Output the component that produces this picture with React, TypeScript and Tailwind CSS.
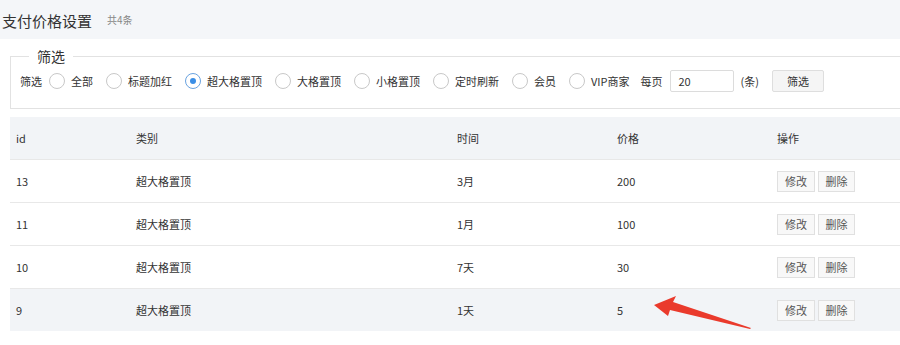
import React from "react";

const font = { fontFamily: '"Noto Sans CJK SC", "Noto Sans", sans-serif' };

const options = ["全部", "标题加红", "超大格置顶", "大格置顶", "小格置顶", "定时刷新", "会员", "VIP商家"];

const rows = [
  { id: "13", type: "超大格置顶", time: "3月", price: "200" },
  { id: "11", type: "超大格置顶", time: "1月", price: "100" },
  { id: "10", type: "超大格置顶", time: "7天", price: "30" },
  { id: "9", type: "超大格置顶", time: "1天", price: "5", hl: true },
];

function Radio({ checked }: { checked?: boolean }) {
  return (
    <span
      className={
        "flex h-[16px] w-[16px] shrink-0 items-center justify-center rounded-full border bg-white " +
        (checked ? "border-[#6aa3e0]" : "border-[#c8c8c8]")
      }
    >
      {checked && <span className="h-[6px] w-[6px] rounded-full bg-[#3a8ee6]" />}
    </span>
  );
}

export default function App() {
  return (
    <div className="relative h-[345px] w-[900px] overflow-hidden bg-white text-[#333]" style={font}>
      <div className="flex h-[39px] items-center bg-[#f4f6f9] pl-[2px] pt-[1px]">
        <span className="text-[15px] leading-none text-[#333]">支付价格设置</span>
        <span className="ml-[15px] text-[10px] leading-none text-[#888]">共4条</span>
      </div>

      <fieldset className="ml-[10px] mt-[8px] h-[62px] w-[900px] border border-[#e2e2e2] px-[9px] pt-[2px]">
        <legend className="ml-[9px] px-[8px] text-[14px] leading-[18px] text-[#333]">筛选</legend>
        <div className="mt-[3px] flex items-center text-[11px] leading-none">
          <span className="mr-[7px]">筛选</span>
          {options.map((o, i) => (
            <div key={o} className="mr-[13px] flex items-center">
              <Radio checked={i === 2} />
              <span className="ml-[6px]">{o}</span>
            </div>
          ))}
          <span className="-ml-[2px]">每页</span>
          <div className="ml-[7px] flex h-[22px] w-[64px] items-center rounded-[2px] border border-[#dcdcdc] pl-[8px]">20</div>
          <span className="ml-[7px]">(条)</span>
          <div className="ml-[13px] flex h-[22px] w-[52px] items-center justify-center rounded-[2px] border border-[#dedede] bg-[#f5f5f5] text-[#333]">
            筛选
          </div>
        </div>
      </fieldset>

      <div className="ml-[10px] mt-[8px] w-[890px] text-[11px]">
        <div className="flex h-[42px] items-center bg-[#f2f4f7]">
          <div className="w-[120px] pl-[6px]">id</div>
          <div className="w-[321px] pl-[6px]">类别</div>
          <div className="w-[160px] pl-[6px]">时间</div>
          <div className="w-[160px] pl-[6px]">价格</div>
          <div className="pl-[6px]">操作</div>
        </div>
        {rows.map((r) => (
          <div
            key={r.id}
            className={
              "flex h-[43px] items-center border-t border-[#e8e8e8] " + (r.hl ? "bg-[#f2f4f7]" : "bg-white")
            }
          >
            <div className="w-[120px] pl-[6px]">{r.id}</div>
            <div className="w-[321px] pl-[6px]">{r.type}</div>
            <div className="w-[160px] pl-[6px]">{r.time}</div>
            <div className="w-[160px] pl-[6px]">{r.price}</div>
            <div className="flex gap-[3px] pl-[6px]">
              <span className="flex h-[21px] w-[38px] items-center justify-center border border-[#e0e0e0] bg-[#f8f8f8] text-[#555]">
                修改
              </span>
              <span className="flex h-[21px] w-[37px] items-center justify-center border border-[#e0e0e0] bg-[#f8f8f8] text-[#555]">
                删除
              </span>
            </div>
          </div>
        ))}
      </div>

      <svg className="absolute left-0 top-0" width="900" height="345" viewBox="0 0 900 345">
        <polygon
          points="654,305 676,296 673,302 751,328 750,329 670,310 668,316"
          fill="#ea3a2c"
        />
      </svg>
    </div>
  );
}
